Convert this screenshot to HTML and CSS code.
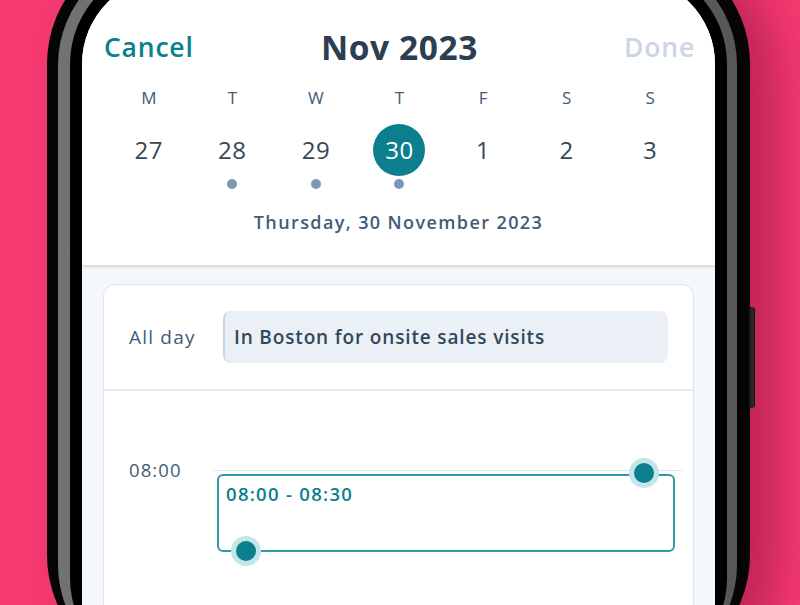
FILE: index.html
```html
<!DOCTYPE html>
<html>
<head>
<meta charset="utf-8">
<link rel="stylesheet" href="styles.css">
</head>
<body>
<div class="stage">
  <div class="phone">
    <div class="side-button"></div>
    <div class="bezel">
      <div class="inner">
        <div class="screen">
          <div class="header">
            <div class="topbar">
              <span class="cancel">Cancel</span>
              <span class="title">Nov 2023</span>
              <span class="done">Done</span>
            </div>
            <div class="week weekdays">
              <span>M</span><span>T</span><span>W</span><span>T</span><span>F</span><span>S</span><span>S</span>
            </div>
            <div class="week dates">
              <span>27</span><span>28</span><span>29</span><span class="selected">30</span><span>1</span><span>2</span><span>3</span>
            </div>
            <div class="week dots">
              <span></span><span><i></i></span><span><i></i></span><span><i></i></span><span></span><span></span><span></span>
            </div>
            <div class="subtitle">Thursday, 30 November 2023</div>
          </div>
          <div class="content">
            <div class="card">
              <div class="allday">
                <span class="allday-label">All day</span>
                <div class="allday-input">In Boston for onsite sales visits</div>
              </div>
              <div class="timeline">
                <div class="hour">
                  <span class="hour-label">08:00</span>
                  <div class="slot">
                    <div class="event">
                      <span class="event-time">08:00 - 08:30</span>
                      <span class="handle handle-top"></span>
                      <span class="handle handle-bottom"></span>
                    </div>
                  </div>
                </div>
              </div>
            </div>
          </div>
        </div>
      </div>
    </div>
  </div>
</div>
</body>
</html>
```

FILE: styles.css
```css
* { box-sizing: border-box; }
html, body { margin: 0; padding: 0; }
body {
  width: 800px;
  height: 605px;
  overflow: hidden;
  background: #f73a72;
  font-family: "Open Sans", "Noto Sans", sans-serif;
}
.stage {
  width: 800px;
  height: 605px;
  overflow: hidden;
  padding-left: 47px;
}
.phone {
  position: relative;
  width: 703px;
  margin-top: -58px;
  background: #050505;
  border-radius: 122px;
  padding: 11px 13px 0 11px;
  box-shadow: 28px 10px 48px rgba(120, 10, 50, 0.45);
}
.side-button {
  position: absolute;
  right: -5px;
  top: 365px;
  width: 6px;
  height: 101px;
  background: linear-gradient(90deg, #111, #2e2e2e 60%, #0c0c0c);
  border-radius: 0 3px 3px 0;
}
.bezel {
  background: linear-gradient(90deg, #727272, #666 50%, #575757);
  border-radius: 112px;
  padding: 12px 10px 0 12px;
}
.inner {
  background: #000;
  border-radius: 99px;
  padding: 12px 12px 0 12px;
}
.screen {
  background: #f5f8fa;
  border-radius: 87px 87px 0 0;
  height: 700px;
  overflow: hidden;
}
.header {
  background: #fff;
  padding: 47px 0 31px;
  box-shadow: 0 2px 3px rgba(45, 62, 80, 0.18);
  position: relative;
}
.topbar {
  height: 40px;
  display: grid;
  grid-template-columns: 1fr auto 1fr;
  align-items: center;
  padding: 0 20px 0 22px;
}
.cancel, .done {
  font-size: 26.5px;
  font-weight: 600;
  letter-spacing: 0.8px;
  color: #0b7f8e;
}
.done { color: #cbd6e2; text-align: right; }
.title {
  font-size: 33.5px;
  font-weight: 700;
  letter-spacing: 0.6px;
  color: #2d3e50;
}
.week {
  display: grid;
  grid-template-columns: repeat(7, 1fr);
  padding: 0 23px 0 25px;
  text-align: center;
}
.weekdays {
  margin-top: 23px;
  line-height: 22px;
  font-size: 17px;
  font-weight: 500;
  color: #425b76;
}
.dates {
  margin-top: 15px;
  height: 52px;
  align-items: center;
  font-size: 24px;
  letter-spacing: 0.5px;
  color: #33475b;
}
.dates span {
  justify-self: center;
  width: 52px;
  height: 52px;
  line-height: 52px;
}
.dates .selected {
  background: #0b7f8e;
  color: #fff;
  border-radius: 50%;
}
.dots {
  margin-top: 3px;
  height: 10px;
}
.dots span { display: flex; justify-content: center; }
.dots i {
  display: block;
  width: 10px;
  height: 10px;
  border-radius: 50%;
  background: #7c98b6;
}
.subtitle {
  margin-top: 21px;
  line-height: 24px;
  text-align: center;
  font-size: 18px;
  font-weight: 600;
  letter-spacing: 1.4px;
  color: #425b76;
}
.content {
  padding: 19px 21px 0;
}
.card {
  background: #fff;
  border: 1px solid #dfe3eb;
  border-radius: 12px;
  height: 400px;
}
.allday {
  display: flex;
  align-items: center;
  padding: 26px 25px 26px 25px;
  border-bottom: 2px solid #e5e9f0;
}
.allday-label {
  width: 94px;
  font-size: 19px;
  letter-spacing: 1.2px;
  color: #425b76;
}
.allday-input {
  flex: 1;
  height: 52px;
  line-height: 52px;
  background: #eaf0f6;
  border-left: 2px solid #cbd6e2;
  border-radius: 8px;
  padding-left: 9px;
  font-size: 19px;
  font-weight: 600;
  letter-spacing: 0.85px;
  color: #33475b;
}
.timeline {
  padding: 69px 10px 0 25px;
}
.hour {
  display: flex;
  align-items: flex-start;
}
.hour-label {
  width: 84px;
  line-height: 20px;
  font-size: 18.5px;
  letter-spacing: 1.1px;
  color: #425b76;
}
.slot {
  flex: 1;
  margin-top: 10px;
  border-top: 1px solid #e1e4ef;
  padding: 3px 8px 0 4px;
}
.event {
  position: relative;
  height: 78px;
  border: 2px solid #3399a5;
  border-radius: 6px;
  padding: 8px 0 0 7px;
}
.event-time {
  display: block;
  line-height: 20px;
  font-size: 18.5px;
  font-weight: 600;
  letter-spacing: 1.3px;
  color: #0b7f8e;
}
.handle {
  position: absolute;
  width: 20px;
  height: 20px;
  border-radius: 50%;
  background: #0b7f8e;
  box-shadow: 0 0 0 5px #c3e6ea;
}
.handle-top { left: 415px; top: -13px; }
.handle-bottom { left: 17px; top: 65px; }
```
